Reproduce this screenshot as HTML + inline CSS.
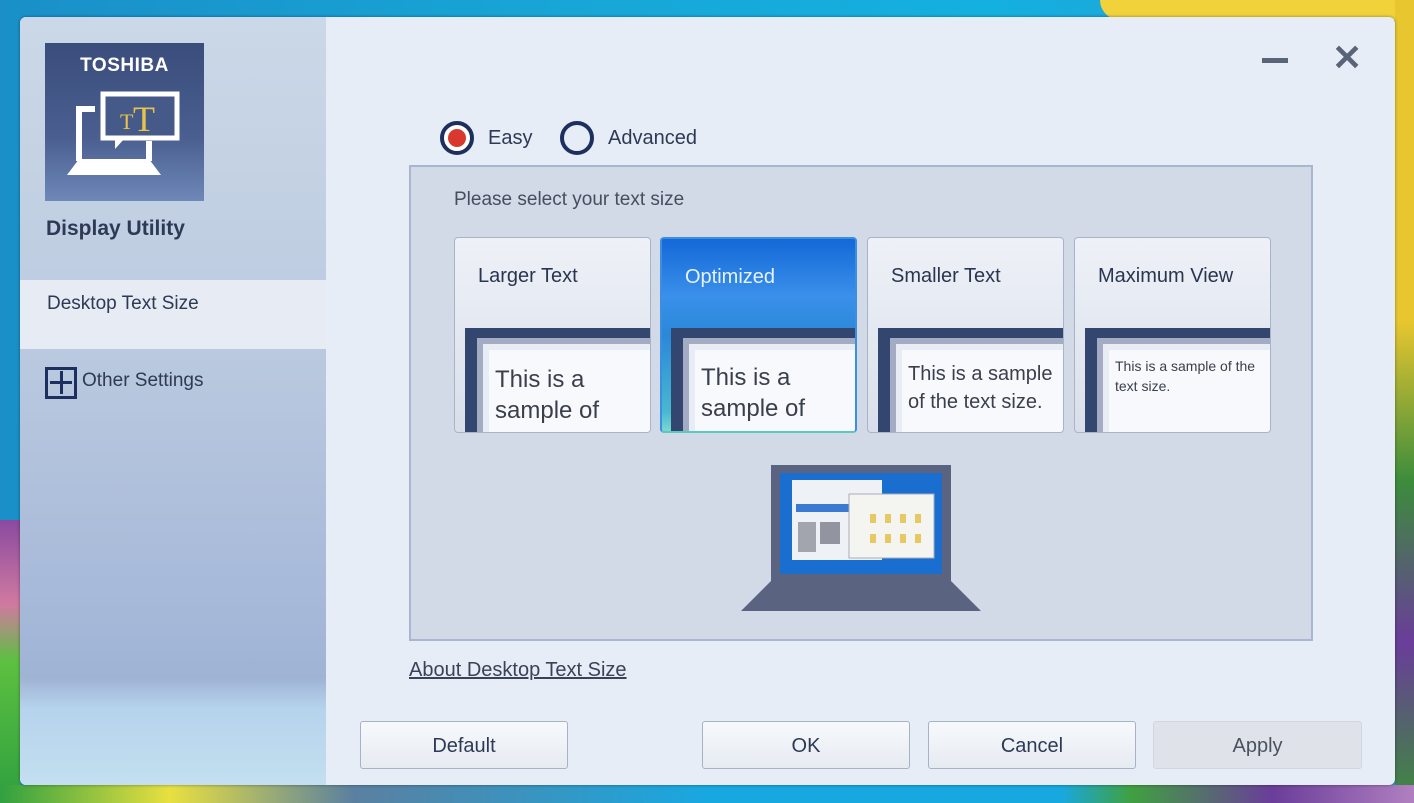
<!DOCTYPE html>
<html><head><meta charset="utf-8"><style>
*{margin:0;padding:0;box-sizing:border-box}
body{width:1414px;height:803px;overflow:hidden;position:relative;font-family:"Liberation Sans",sans-serif;
background:linear-gradient(90deg,#1a8fc8 0%,#18a6d6 40%,#14b0e0 70%,#2a9ad0 100%);}
.abs{position:absolute}
.win{left:20px;top:17px;width:1375px;height:768px;background:#e7edf6;border-radius:6px;overflow:hidden;box-shadow:0 0 3px rgba(0,0,0,.4)}
.side{left:0;top:0;width:306px;height:768px;background:linear-gradient(180deg,#cbd8e7 0%,#bccbe0 40%,#a4b7d8 80%,#9fb3d4 86%,#b5d3ec 90%,#c3dff0 100%)}
.t{color:#2e3a55;font-size:19px;white-space:nowrap}
.tile{width:197px;height:196px;border:1px solid #a9b4c8;border-radius:4px;background:linear-gradient(180deg,#eef1f7,#d9dfea);overflow:hidden}
.tile .lbl{position:absolute;left:23px;top:27px;font-size:20px;color:#2a3550}
.fr{position:absolute;left:10px;top:90px;width:190px;height:110px;background:#33466f}
.fr2{position:absolute;left:12px;top:10px;width:180px;height:100px;background:#a3acc2}
.fr3{position:absolute;left:6px;top:6px;width:180px;height:100px;background:#e8ecf4}
.fr4{position:absolute;left:6px;top:6px;width:180px;height:100px;background:#f7f9fc;color:#3a3f4c;overflow:hidden;padding:14px 0 0 6px}
.btn{height:48px;border:1px solid #a7b2c4;border-radius:3px;background:linear-gradient(180deg,#f7f9fc,#e6ebf2);font-size:20px;color:#2e3a55;text-align:center;line-height:48px}
</style></head><body>
<div class="abs" style="left:1100px;top:0;width:314px;height:20px;background:#f2d23a;border-radius:0 0 0 40px"></div>
<div class="abs" style="left:1395px;top:0;width:19px;height:803px;background:linear-gradient(180deg,#e8c630 0%,#e8c630 40%,#3c8c3c 60%,#6a3d9a 80%,#3e8a3e 100%)"></div>
<div class="abs" style="left:0;top:520px;width:20px;height:283px;background:linear-gradient(180deg,#8a4aa0,#d07aa0 30%,#5cc040 50%,#2ea040 100%)"></div>
<div class="abs" style="left:0;top:785px;width:1414px;height:18px;background:linear-gradient(90deg,#30a040 0%,#e8e040 12%,#5a80a0 25%,#18a8e0 50%,#18a8e0 75%,#40a040 80%,#6a3d9a 90%,#b080c0 100%)"></div>
<div class="abs win">
 <div class="abs side">
  <div class="abs" style="left:25px;top:26px;width:159px;height:158px;background:linear-gradient(180deg,#3a4d7c 0%,#4a5f90 60%,#6e88b8 100%)">
   <div class="abs" style="left:0;top:12px;width:159px;text-align:center;color:#fff;font-weight:bold;font-size:19px;letter-spacing:.5px">TOSHIBA</div>
   <svg class="abs" style="left:20px;top:48px" width="120" height="90" viewBox="0 0 120 90">
    <path d="M30 18 H14 V70" fill="none" stroke="#fff" stroke-width="6"/>
    <path d="M84 50 V70" fill="none" stroke="#fff" stroke-width="6"/>
    <path d="M14 68 H84 L96 84 H2Z" fill="#fff"/>
    <rect x="38" y="3" width="74" height="44" fill="#465a8a" stroke="#fff" stroke-width="5"/>
    <path d="M50 47 L50 58 L60 47Z" fill="#fff"/>
    <text x="55" y="38" font-family="Liberation Serif,serif" font-size="22" fill="#e8c24a">T</text>
    <text x="68" y="40" font-family="Liberation Serif,serif" font-size="36" fill="#e8c24a">T</text>
   </svg>
  </div>
  <div class="abs" style="left:26px;top:200px;font-size:21px;font-weight:bold;color:#2e3a55">Display Utility</div>
  <div class="abs" style="left:0;top:263px;width:306px;height:69px;background:#e7ecf4"></div>
  <div class="abs t" style="left:27px;top:276px">Desktop Text Size</div>
  <div class="abs" style="left:25px;top:350px;width:32px;height:32px;border:3px solid #1d2f5e"></div>
  <div class="abs" style="left:30px;top:364px;width:22px;height:3px;background:#1d2f5e"></div>
  <div class="abs" style="left:40px;top:354px;width:3px;height:23px;background:#1d2f5e"></div>
  <div class="abs t" style="left:62px;top:353px">Other Settings</div>
 </div>
 <div class="abs" style="left:1242px;top:41px;width:26px;height:5px;background:#5a6478"></div>
 <div class="abs" style="left:1312px;top:20px;font-size:36px;font-weight:bold;color:#5a6478">✕</div>
 <div class="abs" style="left:420px;top:104px;width:34px;height:34px;border:4px solid #1d2f5e;border-radius:50%;background:#fff"></div>
 <div class="abs" style="left:428px;top:112px;width:18px;height:18px;border-radius:50%;background:#d8382e"></div>
 <div class="abs t" style="left:468px;top:110px;font-size:20px">Easy</div>
 <div class="abs" style="left:540px;top:104px;width:34px;height:34px;border:4px solid #1d2f5e;border-radius:50%"></div>
 <div class="abs t" style="left:588px;top:110px;font-size:20px">Advanced</div>
 <div class="abs" style="left:389px;top:148px;width:904px;height:476px;background:#d2dae7;border:2px solid #a9b6d0"></div>
 <div class="abs t" style="left:434px;top:172px;color:#454e60">Please select your text size</div>

 <div class="abs tile" style="left:434px;top:220px"><div class="lbl">Larger Text</div>
  <div class="fr"><div class="fr2"><div class="fr3"><div class="fr4" style="font-size:24px;line-height:31px">This is a<br>sample of</div></div></div></div></div>
 <div class="abs tile" style="left:640px;top:220px;border:2px solid #3a8fe0;border-bottom-color:#5cc8c0;background:linear-gradient(180deg,#1468d8 0%,#3a90ea 30%,#2a88d8 50%,#48b8d0 90%,#7ad8d0 100%)"><div class="lbl" style="color:#e8f2ff">Optimized</div>
  <div class="fr" style="left:9px;top:89px"><div class="fr2"><div class="fr3"><div class="fr4" style="font-size:24px;line-height:31px;padding-top:12px">This is a<br>sample of</div></div></div></div></div>
 <div class="abs tile" style="left:847px;top:220px"><div class="lbl">Smaller Text</div>
  <div class="fr"><div class="fr2"><div class="fr3"><div class="fr4" style="font-size:20px;line-height:28px;white-space:nowrap;padding-top:10px">This is a sample<br>of the text size.</div></div></div></div></div>
 <div class="abs tile" style="left:1054px;top:220px"><div class="lbl">Maximum View</div>
  <div class="fr"><div class="fr2"><div class="fr3"><div class="fr4" style="font-size:14px;line-height:20px;white-space:nowrap;padding-top:6px">This is a sample of the<br>text size.</div></div></div></div></div>

 <svg class="abs" style="left:720px;top:447px" width="242" height="148" viewBox="0 0 242 148">
  <rect x="31" y="1" width="180" height="116" fill="#5a6380"/>
  <path d="M31 117 H211 L241 147 H1Z" fill="#5a6380"/>
  <rect x="40" y="9" width="162" height="101" fill="#1a6ed0"/>
  <rect x="52" y="16" width="90" height="80" fill="#eef2f7"/>
  <rect x="56" y="40" width="80" height="8" fill="#3a7ad0"/>
  <rect x="109" y="30" width="85" height="64" fill="#f4f4f0" stroke="#aab" stroke-width="1"/>
  <g fill="#e8c860"><rect x="130" y="50" width="6" height="9"/><rect x="145" y="50" width="6" height="9"/><rect x="160" y="50" width="6" height="9"/><rect x="175" y="50" width="6" height="9"/><rect x="130" y="70" width="6" height="9"/><rect x="145" y="70" width="6" height="9"/><rect x="160" y="70" width="6" height="9"/><rect x="175" y="70" width="6" height="9"/></g>
  <g fill="#556"><rect x="58" y="58" width="18" height="30" opacity=".5"/><rect x="80" y="58" width="20" height="22" opacity=".6"/></g>
 </svg>

 <div class="abs t" style="left:389px;top:642px;text-decoration:underline;color:#3a4258;font-size:20px">About Desktop Text Size</div>
 <div class="abs btn" style="left:340px;top:704px;width:208px">Default</div>
 <div class="abs btn" style="left:682px;top:704px;width:208px">OK</div>
 <div class="abs btn" style="left:908px;top:704px;width:208px">Cancel</div>
 <div class="abs btn" style="left:1133px;top:704px;width:209px;background:#dfe3e9;border-color:#d2d7df;color:#4a5262">Apply</div>
</div>
</body></html>
